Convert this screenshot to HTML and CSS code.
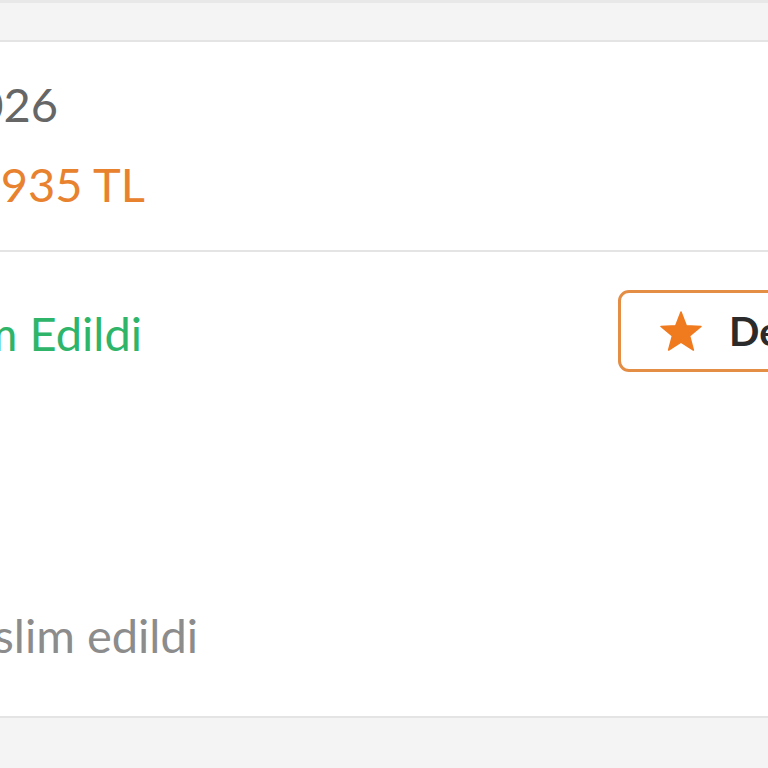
FILE: index.html
```html
<!DOCTYPE html>
<html lang="tr">
<head>
<meta charset="utf-8">
<link rel="stylesheet" href="styles.css">
</head>
<body>
<div class="page">
  <div class="top-strip"></div>
  <section class="card card-summary">
    <div class="line line-date"><span class="date">Sipariş Tarihi: 12.01.2026</span></div>
    <div class="line line-total"><span class="total">Toplam: 1935 TL</span></div>
  </section>
  <section class="card card-status">
    <div class="status-row">
      <div class="line line-status"><span class="status">Teslim Edildi</span></div>
      <div class="rate-btn" role="button">
        <svg class="star" viewBox="-1 -1 42 40" aria-hidden="true">
          <path d="M20 0 L25.29 13.75 L40 14.53 L28.56 23.81 L32.36 38.04 L20 30.03 L7.64 38.04 L11.44 23.81 L0 14.53 L14.71 13.75 Z" fill="#f07a1e" stroke="#f07a1e" stroke-width="1.5" stroke-linejoin="round"/>
        </svg>
        <span class="rate-label">Değerlendir</span>
      </div>
    </div>
    <div class="line line-note"><span class="note">Siparişiniz teslim edildi</span></div>
  </section>
</div>
</body>
</html>
```

FILE: styles.css
```css
html, body {
  margin: 0;
  padding: 0;
}
body {
  background: #f4f4f4;
  font-family: Lato, "Open Sans", sans-serif;
}
.page {
  width: 768px;
  height: 768px;
  overflow: hidden;
  background: #f4f4f4;
}
.top-strip {
  height: 3px;
  background: #e8e8e8;
  margin-bottom: 37px;
}
.card {
  background: #ffffff;
  border-top: 2px solid #e4e4e4;
}
.card-summary {
  padding: 34px 0 38px;
}
.card-status {
  padding: 38px 0 53px;
  border-bottom: 2px solid #e4e4e4;
}
.line {
  display: flex;
  justify-content: flex-end;
  white-space: nowrap;
  font-size: 47px;
  line-height: 56px;
}
.line-date { width: 58px; }
.line-total { width: 145px; margin-top: 24px; }
.line-status { width: 142px; padding-top: 4px; }
.line-note { width: 198px; margin-top: 235px; }
.date { color: #666666; }
.total { color: #e8822e; }
.status { color: #2eb56a; }
.note { color: #8c8c8c; }
.status-row {
  display: flex;
  align-items: center;
  height: 82px;
}
.rate-btn {
  margin-left: 476px;
  flex: none;
  display: flex;
  align-items: center;
  gap: 27px;
  box-sizing: border-box;
  height: 82px;
  padding: 0 40px 0 39px;
  border: 3px solid #e38d45;
  border-radius: 11px;
  background: #ffffff;
  white-space: nowrap;
}
.rate-label {
  font-weight: 700;
  font-size: 40px;
  line-height: 48px;
  color: #2b2b2b;
}
.star {
  display: block;
  flex: none;
  width: 42px;
  height: 40px;
}
```
